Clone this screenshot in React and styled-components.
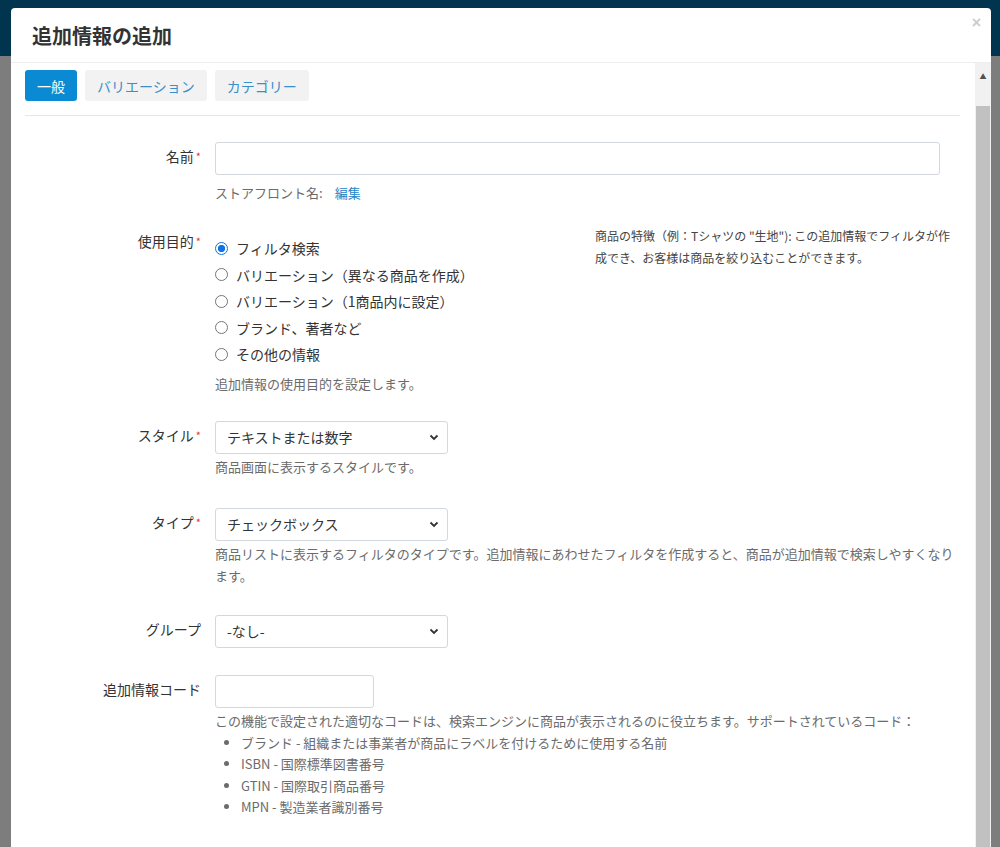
import React from "react";
import styled, { createGlobalStyle } from "styled-components";

const Global = createGlobalStyle`
  html, body { margin: 0; padding: 0; height: 847px; overflow: hidden; }
  body { font-family: "Noto Sans CJK JP", "Liberation Sans", sans-serif; background: #7d7d7d; }
`;

const Page = styled.div`
  position: relative; width: 1000px; height: 847px; overflow: hidden;
  background: linear-gradient(#01354f 0 56px, #7d7d7d 56px);
`;
const Modal = styled.div`
  position: absolute; left: 11px; top: 8px; width: 980px; height: 860px;
  background: #fff; border-radius: 4px 4px 0 0; display: flex; flex-direction: column;
`;
const Header = styled.div`
  height: 54px; border-bottom: 1px solid #eceff1; display: flex; align-items: center;
  padding: 0 21px; position: relative;
`;
const Title = styled.h3`
  margin: 0; font-size: 20px; font-weight: 700; color: #333;
`;
const Close = styled.span`
  position: absolute; right: 10px; top: 6px; color: #ccc; font-size: 16px; font-weight: 700;
  font-family: "Liberation Sans", sans-serif;
`;
const BodyWrap = styled.div`display: flex; flex: 1;`;
const Body = styled.div`flex: 1; padding: 7px 15px 0 14px;`;
const Scroll = styled.div`
  width: 16px; display: flex; flex-direction: column; background: #f1f1f1;
`;
const ScrollBtn = styled.div`
  height: 43px; display: flex; justify-content: center; padding-top: 8px; box-sizing: border-box;
  color: #505050; font-size: 7px;
`;
const Thumb = styled.div`flex: 1; background: #c1c1c1; margin: 0 1px;`;
const Tabs = styled.div`
  display: flex; gap: 8px; padding-bottom: 14px; border-bottom: 1px solid #e3e6ea;
`;
const Tab = styled.div`
  height: 31px; padding: 0 12px; border-radius: 3px; display: flex; align-items: center;
  font-size: 14px; background: ${p => p.$active ? "#0a8ad2" : "#f2f2f2"};
  color: ${p => p.$active ? "#fff" : "#3a8fc8"};
`;
const Form = styled.div`display: flex; flex-direction: column; padding-top: 26px;`;
const Row = styled.div`
  display: flex; margin-bottom: ${p => p.$mb || 30}px;
`;
const Label = styled.div`
  width: 176px; padding-right: 14px; text-align: right; font-size: 14px; color: #333;
  padding-top: ${p => p.$pt ?? 4}px; line-height: 20px; flex-shrink: 0;
  margin-top: ${p => p.$mt ?? 0}px;
`;
const Req = styled.span`color: #e03a3a; font-size: 11px; vertical-align: top; margin-left: 2px;`;
const Controls = styled.div`flex: 1; max-width: 745px; display: flex; flex-direction: column;`;
const Input = styled.div`
  width: ${p => p.$w}; height: 33px; box-sizing: border-box; border: 1px solid #d3d8de; border-radius: 3px;
`;
const Select = styled.div`
  width: 233px; height: 33px; box-sizing: border-box; border: 1px solid #d3d8de; border-radius: 3px;
  display: flex; align-items: center; justify-content: space-between; padding: 0 8px 0 11px;
  font-size: 14px; color: #333;
`;
const Help = styled.div`
  font-size: 13px; color: #6b6b6b; line-height: 22px; margin-top: ${p => p.$mt || 3}px;
`;
const Link = styled.span`color: #1f86c8; margin-left: 12px;`;
const Split = styled.div`display: flex;`;
const Radios = styled.div`width: 380px; display: flex; flex-direction: column;`;
const Radio = styled.label`
  display: flex; align-items: center; gap: 8px; font-size: 14px; color: #333; height: 26.5px;
`;
const Dot = styled.span`
  width: 13px; height: 13px; border-radius: 50%; box-sizing: border-box; flex-shrink: 0;
  border: ${p => p.$on ? "1.5px solid #0b75e8" : "1px solid #767676"};
  background: ${p => p.$on ? "radial-gradient(circle, #0b75e8 0 3.4px, #fff 3.9px)" : "#fff"};
`;
const Side = styled.div`
  font-size: 12px; color: #444; line-height: 22px; width: 365px; margin-top: -10px;
`;
const List = styled.ul`
  margin: 0; padding-left: 26px; font-size: 13px; color: #6b6b6b; line-height: 21.5px;
`;

const Chevron = () => (
  <svg width="10" height="10" viewBox="0 0 10 10"><path d="M1.5 3.5 L5 7 L8.5 3.5" fill="none" stroke="#333" strokeWidth="1.8"/></svg>
);

export default function App() {
  return (
    <Page>
      <Global />
      <Modal>
        <Header>
          <Title>追加情報の追加</Title>
          <Close>×</Close>
        </Header>
        <BodyWrap>
          <Body>
            <Tabs>
              <Tab $active>一般</Tab>
              <Tab>バリエーション</Tab>
              <Tab>カテゴリー</Tab>
            </Tabs>
            <Form>
              <Row $mb={31}>
                <Label>名前<Req>*</Req></Label>
                <Controls>
                  <Input $w="725px" />
                  <Help $mt={7}>ストアフロント名:<Link>編集</Link></Help>
                </Controls>
              </Row>
              <Row $mb={26}>
                <Label $pt={0} $mt={-4}>使用目的<Req>*</Req></Label>
                <Controls>
                  <Split>
                    <Radios>
                      <Radio><Dot $on />フィルタ検索</Radio>
                      <Radio><Dot />バリエーション（異なる商品を作成）</Radio>
                      <Radio><Dot />バリエーション（1商品内に設定）</Radio>
                      <Radio><Dot />ブランド、著者など</Radio>
                      <Radio><Dot />その他の情報</Radio>
                    </Radios>
                    <Side>商品の特徴（例：Tシャツの "生地"): この追加情報でフィルタが作成でき、お客様は商品を絞り込むことができます。</Side>
                  </Split>
                  <Help $mt={5}>追加情報の使用目的を設定します。</Help>
                </Controls>
              </Row>
              <Row $mb={30}>
                <Label>スタイル<Req>*</Req></Label>
                <Controls>
                  <Select>テキストまたは数字<Chevron /></Select>
                  <Help $mt={2}>商品画面に表示するスタイルです。</Help>
                </Controls>
              </Row>
              <Row $mb={28}>
                <Label>タイプ<Req>*</Req></Label>
                <Controls>
                  <Select>チェックボックス<Chevron /></Select>
                  <Help $mt={2}>商品リストに表示するフィルタのタイプです。追加情報にあわせたフィルタを作成すると、商品が追加情報で検索しやすくなります。</Help>
                </Controls>
              </Row>
              <Row $mb={27}>
                <Label>グループ</Label>
                <Controls>
                  <Select>-なし-<Chevron /></Select>
                </Controls>
              </Row>
              <Row>
                <Label>追加情報コード</Label>
                <Controls>
                  <Input $w="159px" />
                  <Help $mt={2}>この機能で設定された適切なコードは、検索エンジンに商品が表示されるのに役立ちます。サポートされているコード：</Help>
                  <List>
                    <li>ブランド - 組織または事業者が商品にラベルを付けるために使用する名前</li>
                    <li>ISBN - 国際標準図書番号</li>
                    <li>GTIN - 国際取引商品番号</li>
                    <li>MPN - 製造業者識別番号</li>
                  </List>
                </Controls>
              </Row>
            </Form>
          </Body>
          <Scroll>
            <ScrollBtn>▲</ScrollBtn>
            <Thumb />
          </Scroll>
        </BodyWrap>
      </Modal>
    </Page>
  );
}
